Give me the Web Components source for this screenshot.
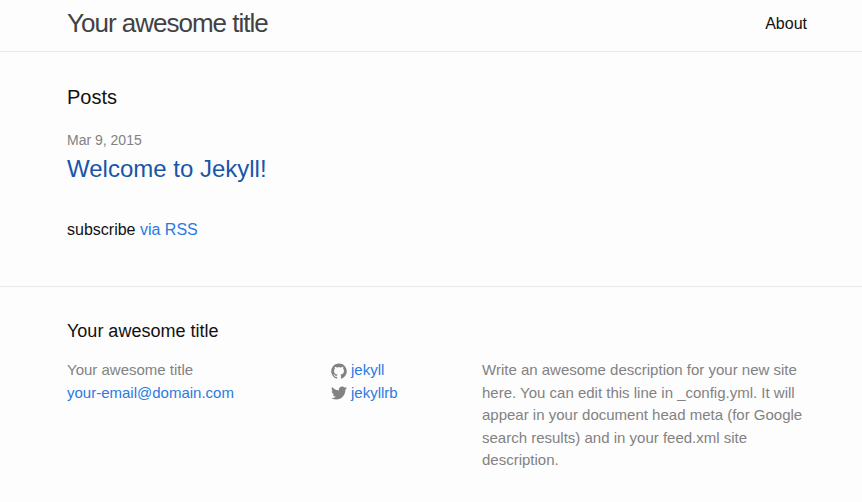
<!DOCTYPE html>
<html lang="en">
<head>
<meta charset="utf-8">
<meta name="viewport" content="width=device-width, initial-scale=1">
<title>Your awesome title</title>
<style>
  body { margin: 0; background: #fdfdfd; color: #111; font: 16px/24px "Liberation Sans", Arial, sans-serif; }
</style>
</head>
<body>
<site-header heading="Your awesome title"><a slot="nav" href="#about" style="color:inherit;text-decoration:none">About</a></site-header>
<post-list>
  <post-item date="Mar 9, 2015" href="#welcome">Welcome to Jekyll!</post-item>
</post-list>
<site-footer heading="Your awesome title">
  <contact-info slot="contact" email="your-email@domain.com">Your awesome title</contact-info>
  <social-link slot="social" icon="github" href="#github">jekyll</social-link>
  <social-link slot="social" icon="twitter" href="#twitter">jekyllrb</social-link>
  <span slot="about">Write an awesome description for your new site here. You can edit this line in _config.yml. It will appear in your document head meta (for Google search results) and in your feed.xml site description.</span>
</site-footer>
<script>
class BaseElement extends HTMLElement {
  mount(html) { this.attachShadow({ mode: 'open' }).innerHTML = html; }
}
const shared = `
  * { box-sizing: border-box; }
  h1, h2, h3, p, ul { margin: 0; padding: 0; font-weight: 400; }
  a { color: #2a7ae2; text-decoration: none; }
  a:hover { text-decoration: underline; }
  .wrapper { max-width: 800px; margin: 0 auto; padding: 0 24px 0 36px; }`;

customElements.define('site-header', class extends BaseElement {
  connectedCallback() {
    this.mount(`<style>${shared}
      :host { display: block; border-bottom: 1px solid #e8e8e8; }
      .wrapper { display: flex; justify-content: space-between; align-items: flex-start; min-height: 51px; }
      .title { color: #424242; font-size: 26px; line-height: 46px; letter-spacing: -1px; }
      nav { line-height: 48px; }
    </style>
    <header class="wrapper"><a class="title" href="#home">${this.getAttribute('heading')}</a><nav><slot name="nav"></slot></nav></header>`);
  }
});

customElements.define('post-item', class extends BaseElement {
  connectedCallback() {
    this.mount(`<style>${shared}
      :host { display: block; }
      time { display: block; color: #828282; font-size: 14px; line-height: 24px; }
      h2 { font-size: 24px; line-height: 34px; }
      h2 a { color: #1756a9; }
    </style>
    <time datetime="2015-03-09">${this.getAttribute('date')}</time>
    <h2><a href="${this.getAttribute('href')}"><slot></slot></a></h2>`);
  }
});

customElements.define('post-list', class extends BaseElement {
  connectedCallback() {
    this.mount(`<style>${shared}
      :host { display: block; padding: 30px 0 44px; }
      h1 { font-size: 20px; line-height: 30px; margin-bottom: 16px; }
      p { margin-top: 32px; }
    </style>
    <main class="wrapper"><h1>Posts</h1><slot></slot><p>subscribe <a href="#feed">via RSS</a></p></main>`);
  }
});

customElements.define('contact-info', class extends BaseElement {
  connectedCallback() {
    const email = this.getAttribute('email');
    this.mount(`<style>${shared}
      :host { display: block; }
      ul { list-style: none; }
    </style>
    <ul><li><slot></slot></li><li><a href="mailto:${email}">${email}</a></li></ul>`);
  }
});

const icons = {
  github: '<path d="M7.999,0.431c-4.285,0-7.76,3.474-7.76,7.761 c0,3.428,2.223,6.337,5.307,7.363c0.388,0.071,0.53-0.168,0.53-0.374c0-0.184-0.007-0.672-0.01-1.32 c-2.159,0.469-2.614-1.04-2.614-1.04c-0.353-0.896-0.862-1.135-0.862-1.135c-0.705-0.481,0.053-0.472,0.053-0.472 c0.779,0.055,1.189,0.8,1.189,0.8c0.692,1.186,1.816,0.843,2.258,0.645c0.071-0.502,0.271-0.843,0.493-1.037 C4.86,11.425,3.049,10.76,3.049,7.786c0-0.847,0.302-1.54,0.799-2.082C3.768,5.507,3.501,4.718,3.924,3.65 c0,0,0.652-0.209,2.134,0.796C6.677,4.273,7.34,4.187,8,4.184c0.659,0.003,1.323,0.089,1.943,0.261 c1.482-1.004,2.132-0.796,2.132-0.796c0.423,1.068,0.157,1.857,0.077,2.054c0.497,0.542,0.798,1.235,0.798,2.082 c0,2.981-1.814,3.637-3.543,3.829c0.279,0.24,0.527,0.713,0.527,1.437c0,1.037-0.01,1.874-0.01,2.129 c0,0.208,0.14,0.449,0.534,0.373c3.081-1.028,5.302-3.935,5.302-7.362C15.76,3.906,12.285,0.431,7.999,0.431z"/>',
  twitter: '<path d="M15.969,3.058c-0.586,0.26-1.217,0.436-1.878,0.515c0.675-0.405,1.194-1.045,1.438-1.809 c-0.632,0.375-1.332,0.647-2.076,0.793c-0.596-0.636-1.446-1.033-2.387-1.033c-1.806,0-3.27,1.464-3.27,3.27 c0,0.256,0.029,0.506,0.085,0.745C5.163,5.404,2.753,4.102,1.14,2.124C0.859,2.607,0.698,3.168,0.698,3.767 c0,1.134,0.577,2.135,1.455,2.722C1.616,6.472,1.112,6.325,0.671,6.08c0,0.014,0,0.027,0,0.041c0,1.584,1.127,2.906,2.623,3.206 C3.02,9.402,2.731,9.442,2.433,9.442c-0.211,0-0.416-0.021-0.615-0.059c0.416,1.299,1.624,2.245,3.055,2.271 c-1.119,0.877-2.529,1.4-4.061,1.4c-0.264,0-0.524-0.015-0.78-0.046c1.447,0.928,3.166,1.469,5.013,1.469 c6.015,0,9.304-4.983,9.304-9.304c0-0.142-0.003-0.283-0.009-0.423C14.976,4.29,15.531,3.714,15.969,3.058z"/>'
};
customElements.define('social-link', class extends BaseElement {
  connectedCallback() {
    this.mount(`<style>${shared}
      :host { display: block; }
      a { display: flex; gap: 4px; align-items: center; }
      svg { width: 16px; height: 17px; padding-top: 1px; fill: #828282; }
    </style>
    <a href="${this.getAttribute('href')}"><svg viewBox="0 0 16 16" aria-hidden="true">${icons[this.getAttribute('icon')]}</svg><span><slot></slot></span></a>`);
  }
});

customElements.define('site-footer', class extends BaseElement {
  connectedCallback() {
    this.mount(`<style>${shared}
      :host { display: block; border-top: 1px solid #e8e8e8; padding: 30px 0; }
      h2 { font-size: 18px; line-height: 28px; margin-bottom: 14px; }
      .columns { display: grid; grid-template-columns: 264fr 151fr 325fr; color: #828282; font-size: 15px; line-height: 1.5; }
    </style>
    <footer class="wrapper"><h2>${this.getAttribute('heading')}</h2>
      <div class="columns"><div><slot name="contact"></slot></div><div><slot name="social"></slot></div><div><slot name="about"></slot></div></div>
    </footer>`);
  }
});
</script>
</body>
</html>
